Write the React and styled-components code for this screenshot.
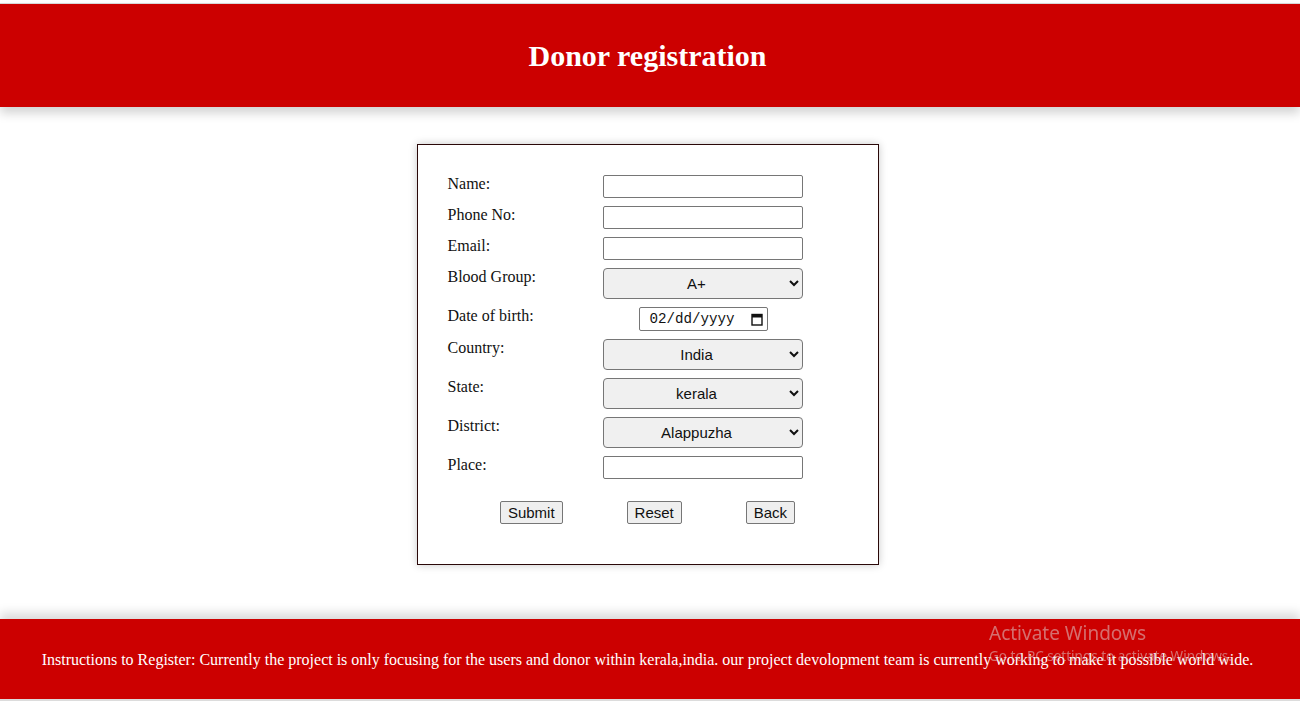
import React from 'react';
import styled, { createGlobalStyle } from 'styled-components';

const GlobalStyle = createGlobalStyle`
  html, body {
    margin: 0;
    padding: 0;
    background: #ffffff;
  }
  body {
    font-family: "Liberation Serif", "Times New Roman", serif;
  }
`;

const fields = [
  { label: 'Name:', kind: 'text' },
  { label: 'Phone No:', kind: 'text' },
  { label: 'Email:', kind: 'text' },
  { label: 'Blood Group:', kind: 'select', options: ['A+', 'A-', 'B+', 'B-', 'O+', 'O-', 'AB+', 'AB-'] },
  { label: 'Date of birth:', kind: 'date' },
  { label: 'Country:', kind: 'select', options: ['India'] },
  { label: 'State:', kind: 'select', options: ['kerala'] },
  { label: 'District:', kind: 'select', options: ['Alappuzha', 'Ernakulam', 'Idukki', 'Kannur', 'Kasaragod', 'Kollam', 'Kottayam', 'Kozhikode', 'Malappuram', 'Palakkad', 'Pathanamthitta', 'Thiruvananthapuram', 'Thrissur', 'Wayanad'] },
  { label: 'Place:', kind: 'text' },
];

const CalendarIcon = () => (
  <svg width="12" height="13" viewBox="0 0 12 13" aria-hidden="true">
    <rect x="1" y="1.5" width="10" height="10.5" fill="none" stroke="#111" strokeWidth="1.4" />
    <rect x="1" y="1.5" width="10" height="3" fill="#111" />
  </svg>
);

const Field = ({ kind, options }) => {
  if (kind === 'select') {
    return (
      <Select defaultValue={options[0]}>
        {options.map((o) => <option key={o}>{o}</option>)}
      </Select>
    );
  }
  if (kind === 'date') {
    return (
      <DateBox>
        <DateText>02/dd/yyyy</DateText>
        <CalendarIcon />
      </DateBox>
    );
  }
  return <TextInput type="text" />;
};

const App = () => {
  return (
    <Page>
      <GlobalStyle />
      <Header>
        <Title>Donor registration</Title>
      </Header>

      <Main>
        <FormCard>
          <Rows>
            {fields.map((f) => (
              <Row key={f.label}>
                <Label>{f.label}</Label>
                <Control>
                  <Field kind={f.kind} options={f.options} />
                </Control>
              </Row>
            ))}
          </Rows>
          <Buttons>
            <Button type="button">Submit</Button>
            <Button type="button">Reset</Button>
            <Button type="button">Back</Button>
          </Buttons>
        </FormCard>
      </Main>

      <Footer>
        <FooterText>
          Instructions to Register: Currently the project is only focusing for the users and donor within kerala,india. our project devolopment team is currently working to make it possible world wide.
        </FooterText>
      </Footer>

      <Watermark>
        <WatermarkTitle>Activate Windows</WatermarkTitle>
        <WatermarkSub>Go to PC settings to activate Windows.</WatermarkSub>
      </Watermark>
    </Page>
  );
};

export default App;

const Page = styled.div`
  display: flex;
  flex-direction: column;
  width: 1300px;
  height: 701px;
  overflow: hidden;
  padding-top: 3px;
  box-sizing: border-box;
`;

const Header = styled.header`
  display: flex;
  align-items: center;
  justify-content: center;
  height: 104px;
  box-sizing: border-box;
  border-top: 1px solid #d6d6d6;
  background: #cc0000;
  box-shadow: 0 6px 10px rgba(0, 0, 0, 0.18);
  position: relative;
  z-index: 1;
  padding-right: 5px;
`;

const Title = styled.h1`
  margin: 0;
  color: #ffffff;
  font-size: 30px;
  font-weight: bold;
`;

const Main = styled.main`
  display: flex;
  justify-content: center;
  padding: 37px 5px 0 0;
  height: 512px;
  box-sizing: border-box;
`;

const FormCard = styled.form`
  width: 462px;
  height: 421px;
  box-sizing: border-box;
  border: 1px solid #2a0808;
  background: #ffffff;
  box-shadow: 0 0 8px rgba(0, 0, 0, 0.22);
  padding: 30px 30px 0 30px;
  display: flex;
  flex-direction: column;
`;

const Rows = styled.div`
  display: flex;
  flex-direction: column;
  gap: 8px;
`;

const Row = styled.div`
  display: grid;
  grid-template-columns: 155px 200px;
  align-items: start;
`;

const Label = styled.label`
  font-size: 16px;
  line-height: 18px;
  color: #111;
`;

const Control = styled.div`
  display: flex;
  justify-content: center;
`;

const TextInput = styled.input`
  width: 200px;
  height: 23px;
  box-sizing: border-box;
  border: 1px solid #767676;
  border-radius: 2px;
  padding: 1px 3px;
  font-family: "Liberation Sans", Arial, sans-serif;
  font-size: 15px;
  background: #ffffff;
`;

const Select = styled.select`
  width: 200px;
  height: 31px;
  box-sizing: border-box;
  border: 1px solid #767676;
  border-radius: 4px;
  background-color: #f0f0f0;
  color: #111;
  font-family: "Liberation Sans", Arial, sans-serif;
  font-size: 15px;
  text-align: center;
  text-align-last: center;
  padding: 0 4px;
`;

const DateBox = styled.div`
  display: inline-flex;
  align-items: center;
  justify-content: space-between;
  width: 129px;
  height: 24px;
  box-sizing: border-box;
  border: 1px solid #767676;
  border-radius: 2px;
  padding: 0 4px 0 10px;
  margin-left: 1px;
  background: #ffffff;
`;

const DateText = styled.span`
  font-family: "Liberation Mono", "DejaVu Sans Mono", monospace;
  font-size: 14.2px;
  color: #111;
`;

const Buttons = styled.div`
  display: flex;
  justify-content: center;
  gap: 64px;
  margin-top: 22px;
`;

const Button = styled.button`
  height: 23px;
  box-sizing: border-box;
  padding: 1px 7px;
  border: 1px solid #767676;
  border-radius: 2px;
  background: #efefef;
  color: #111;
  font-family: "Liberation Sans", Arial, sans-serif;
  font-size: 15px;
  line-height: 19px;
`;

const Footer = styled.footer`
  display: flex;
  align-items: center;
  justify-content: center;
  height: 82px;
  box-sizing: border-box;
  background: #cc0000;
  border-bottom: 2px solid #dcdcdc;
  box-shadow: 0 -6px 10px rgba(0, 0, 0, 0.15);
  padding: 2px 5px 0 0;
`;

const FooterText = styled.p`
  margin: 0;
  color: #ffffff;
  font-size: 16px;
`;

const Watermark = styled.div`
  position: fixed;
  left: 989px;
  top: 620px;
  pointer-events: none;
  color: rgba(220, 200, 200, 0.55);
  font-family: "Noto Sans", "Open Sans", sans-serif;
`;

const WatermarkTitle = styled.div`
  font-size: 19px;
  line-height: 26px;
`;

const WatermarkSub = styled.div`
  font-size: 13.5px;
  line-height: 21px;
`;
